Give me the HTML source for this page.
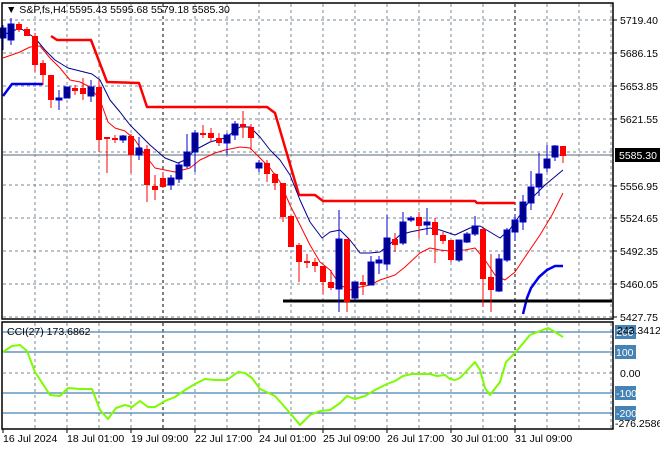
<!DOCTYPE html><html><head><meta charset="utf-8"><style>
html,body{margin:0;padding:0;background:#fff;width:660px;height:450px;overflow:hidden}
svg text{font-family:"Liberation Sans",sans-serif;font-size:10.5px;fill:#000}
</style></head><body>
<svg id="s" width="660" height="450" xmlns="http://www.w3.org/2000/svg">
<g id="grid"></g>
<line x1="3" y1="155" x2="613" y2="155" stroke="#7a8896" stroke-width="1.3"/>
<g id="ind"></g>
<g id="cd"></g>
<rect x="2" y="3" width="611" height="316" fill="none" stroke="#000" stroke-width="1.5"/>
<rect x="2" y="322" width="611" height="107" fill="none" stroke="#000" stroke-width="1.5"/>
<text x="6" y="13">▼ S&amp;P,fs,H4  5595.43 5595.68 5579.18 5585.30</text>
<text x="7" y="335">CCI(27) 173.6862</text>
<g id="ax"></g>
</svg>
<script>
const NS="http://www.w3.org/2000/svg";
function el(p,t,a,txt){const e=document.createElementNS(NS,t);for(const k in a)e.setAttribute(k,a[k]);if(txt!==undefined)e.textContent=txt;document.getElementById(p).appendChild(e);return e;}
// vertical grid
for(let x=35;x<=611;x+=32){const blk=(x==163||x==403||x==515);
 el("grid","line",{x1:x,y1:4,x2:x,y2:318,stroke:blk?"#000":"#7a8896","stroke-dasharray":"3,3"});
 el("grid","line",{x1:x,y1:323,x2:x,y2:428,stroke:blk?"#000":"#7a8896","stroke-dasharray":"3,3"});}
// horizontal grid
[20,53,86,119,152,185,218,251,284,317].forEach(y=>el("grid","line",{x1:3,y1:y,x2:613,y2:y,stroke:"#7a8896","stroke-dasharray":"3,3"}));
el("grid","line",{x1:3,y1:373,x2:613,y2:373,stroke:"#7a8896","stroke-dasharray":"3,3"});
[332,352,393,413].forEach(y=>el("grid","line",{x1:3,y1:y,x2:613,y2:y,stroke:"#4682b4","stroke-width":1.2}));
// price axis
[["5719.40",20],["5686.15",53],["5653.85",86],["5621.55",119],["5556.95",186],["5524.65",218],["5492.35",251],["5460.05",284],["5427.75",317]].forEach(([t,y])=>{el("ax","line",{x1:613,y1:y,x2:617,y2:y,stroke:"#000"});el("ax","text",{x:620,y:y+4},t);});
el("ax","rect",{x:615,y:148,width:45,height:14,fill:"#000"});
el("ax","text",{x:619,y:159,style:"fill:#fff"},"5585.30");
[["200",332],["100",352],["-100",393],["-200",413]].forEach(([t,y])=>{el("ax","rect",{x:615,y:y-7,width:21,height:14,fill:"#4682b4"});el("ax","text",{x:616,y:y+4,style:"fill:#fff"},t);});
el("ax","text",{x:617,y:334},"243.3412");
el("ax","text",{x:620,y:377},"0.00");
el("ax","text",{x:615,y:427},"-276.2586");
[["16 Jul 2024",3],["18 Jul 01:00",67],["19 Jul 09:00",131],["22 Jul 17:00",195],["24 Jul 01:00",259],["25 Jul 09:00",323],["26 Jul 17:00",387],["30 Jul 01:00",451],["31 Jul 09:00",515]].forEach(([t,x])=>{el("ax","line",{x1:x,y1:429,x2:x,y2:433,stroke:"#000"});el("ax","text",{x:x,y:442},t);});
// indicators
function pl(pts,c,w){el("ind","polyline",{points:pts.map(p=>p.join(",")).join(" "),fill:"none",stroke:c,"stroke-width":w,"stroke-linejoin":"round"});}
pl([[51,36],[57,40],[91,40],[107,82],[139,83],[147,107],[267,107],[275,113],[299,195],[315,195],[323,201],[475,201],[477,203],[515,203]],"#f00",2.5);
pl([[3,96],[12,84],[43,84]],"#0000ee",2.5);
pl([[523,314],[527,298],[531,288],[539,277],[547,270],[555,266],[563,266]],"#0000ee",2.5);
pl([[3,35],[20,28],[35,38],[45,50],[55,60],[68,68],[80,71],[92,74],[100,80],[110,100],[120,112],[130,125],[140,135],[150,145],[165,158],[178,163],[185,160],[195,150],[210,142],[225,138],[240,127],[250,127],[260,137],[270,150],[280,160],[290,175],[300,200],[310,222],[322,238],[330,232],[340,230],[350,240],[360,253],[370,253],[380,252],[390,244],[400,235],[410,232],[420,230],[430,228],[440,230],[455,235],[470,228],[480,226],[490,232],[500,238],[510,229],[520,215],[530,200],[545,185],[563,170]],"#00008b",1);
pl([[3,58],[20,52],[30,47],[40,46],[50,58],[60,68],[70,80],[80,82],[90,87],[100,100],[108,122],[115,128],[125,131],[135,140],[145,155],[155,168],[165,170],[175,172],[190,168],[200,160],[215,153],[225,150],[240,147],[250,148],[260,158],[270,168],[280,182],[290,205],[300,225],[310,245],[320,262],[330,270],[340,285],[350,290],[360,287],[370,285],[380,280],[395,275],[405,267],[420,253],[430,248],[440,250],[450,251],[465,250],[475,248],[485,260],[495,275],[505,280],[515,272],[525,257],[540,235],[552,215],[563,193]],"#f00",1);
el("ind","line",{x1:283,y1:301,x2:612,y2:301,stroke:"#000","stroke-width":3});
pl([[3,352],[12,346],[20,345],[27,351],[35,372],[50,395],[60,396],[68,388],[80,389],[92,389],[100,410],[108,419],[116,408],[125,405],[132,407],[140,401],[148,407],[155,407],[165,401],[175,397],[185,390],[195,384],[205,379],[215,380],[227,380],[238,372],[245,373],[252,378],[260,389],[275,396],[290,413],[300,425],[310,415],[320,411],[330,410],[340,403],[347,396],[355,399],[365,396],[375,390],[387,384],[395,381],[403,376],[412,374],[420,374],[430,374],[437,376],[445,375],[450,379],[455,380],[460,378],[475,362],[480,370],[485,388],[490,395],[500,382],[506,362],[513,355],[520,347],[530,335],[540,331],[548,328],[555,332],[563,337]],"#7cfc00",2);
// candles: [color b/r, bodyTop, bodyBot, high, low]
const C=[["b",28,38,25,50],["b",24,40,18,45],["r",24,30,22,32],["r",29,36,27,36],["r",36,65,33,72],["r",63,75,60,85],["r",75,100,75,108],["b",98,100,90,110],["b",87,98,87,97],["r",88,91,85,95],["r",88,94,78,100],["b",87,96,80,102],["r",87,140,80,152],["r",137,139,137,173],["r",138,140,135,143],["b",136,140,135,143],["r",136,155,134,173],["b",148,155,137,160],["r",149,185,145,202],["r",186,190,175,200],["r",178,187,172,188],["b",178,185,175,190],["b",165,179,163,183],["b",152,166,134,168],["b",133,152,130,172],["r",133,135,125,138],["r",133,138,128,142],["r",138,143,133,146],["b",135,143,133,155],["b",124,135,121,140],["r",124,127,111,138],["r",127,138,124,150],["b",163,168,160,172],["r",163,174,160,182],["r",174,183,173,190],["r",183,217,183,222],["r",216,247,215,247],["r",245,262,243,282],["r",261,263,254,268],["r",262,266,258,272],["r",266,282,266,294],["r",282,288,270,290],["b",239,289,210,312],["r",239,302,239,312],["b",282,298,282,300],["r",282,285,275,295],["b",262,285,256,285],["b",260,263,256,274],["b",238,264,215,270],["r",239,245,233,252],["b",222,243,212,245],["b",218,220,216,222],["r",217,226,212,238],["b",222,225,208,235],["r",222,235,218,263],["r",235,241,232,244],["r",240,260,240,262],["b",240,260,240,262],["b",234,242,232,243],["b",226,234,216,236],["r",229,279,228,307],["r",277,290,254,312],["b",259,291,254,292],["b",230,260,228,262],["b",220,232,214,240],["b",202,222,195,230],["b",187,203,171,210],["b",174,187,153,196],["b",159,168,145,172],["b",146,157,145,161],["r",146,156,146,163]];
C.forEach((c,k)=>{const x=3+8*k,col=c[0]=="b"?"#0000cd":"#f00",fill=c[0]=="b"?"#00008b":"#f00";
 el("cd","line",{x1:x,y1:c[3],x2:x,y2:c[4],stroke:col,"stroke-width":1});
 const h=Math.max(c[2]-c[1],1.5);
 el("cd","rect",{x:x-3,y:c[1],width:6,height:h,fill:fill,stroke:col,"stroke-width":c[0]=="b"?1:0});});
</script>
</body></html>
